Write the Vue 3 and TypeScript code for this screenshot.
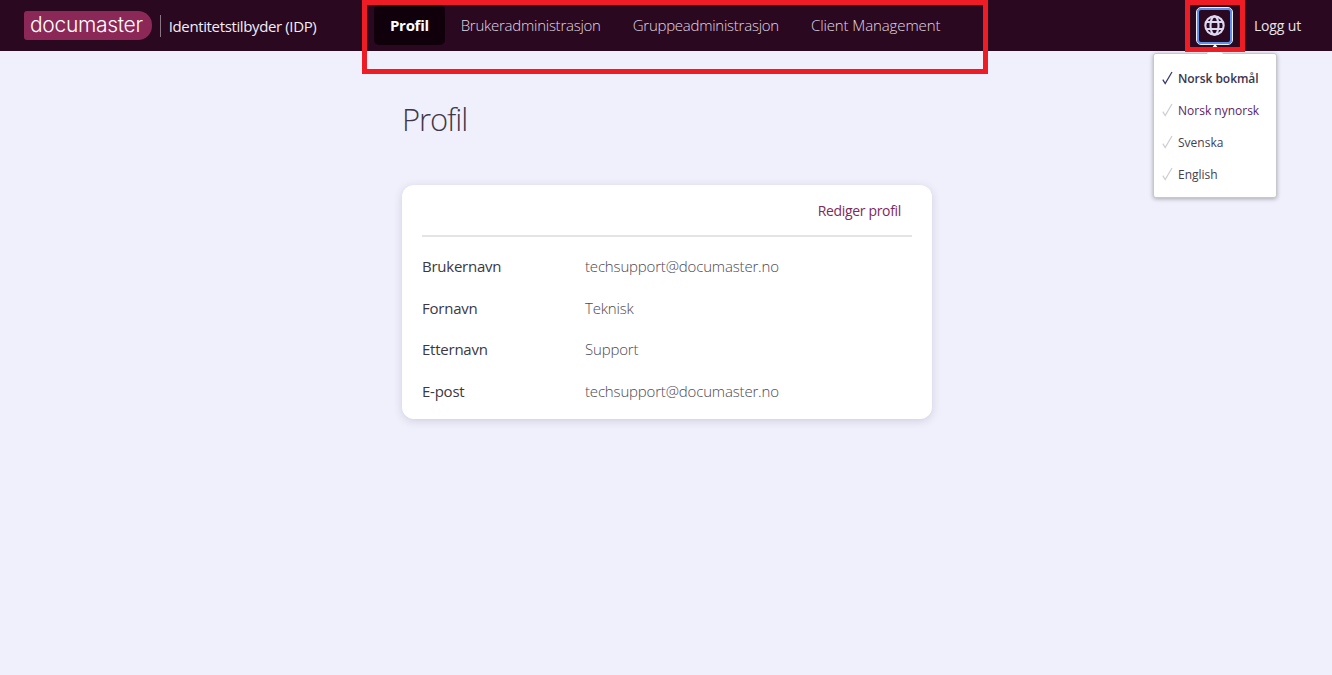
<script setup lang="ts">
const navItems = [
  { label: 'Profil', active: true },
  { label: 'Brukeradministrasjon', active: false },
  { label: 'Gruppeadministrasjon', active: false },
  { label: 'Client Management', active: false },
]

const languages = [
  { label: 'Norsk bokmål', selected: true, tone: 'plain' },
  { label: 'Norsk nynorsk', selected: false, tone: 'link' },
  { label: 'Svenska', selected: false, tone: 'plain' },
  { label: 'English', selected: false, tone: 'plain' },
]

const fields = [
  { label: 'Brukernavn', value: 'techsupport@documaster.no' },
  { label: 'Fornavn', value: 'Teknisk' },
  { label: 'Etternavn', value: 'Support' },
  { label: 'E-post', value: 'techsupport@documaster.no' },
]
</script>

<template>
  <div class="page">
    <header class="topbar">
      <div class="brand">
        <span class="logo">documaster</span>
        <span class="app-name">Identitetstilbyder (IDP)</span>
      </div>
      <nav class="nav">
        <a v-for="item in navItems" :key="item.label" class="nav-item" :class="{ active: item.active }">{{ item.label }}</a>
      </nav>
      <div class="actions">
        <button class="globe" type="button" aria-label="Språk">
          <svg width="21" height="21" viewBox="0 0 22 22" fill="none" stroke="#dcd8f2" stroke-width="2.2">
            <circle cx="11" cy="11" r="9.6" />
            <ellipse cx="11" cy="11" rx="4.2" ry="9.6" />
            <path d="M2.4 7.4h17.2M2.4 14.6h17.2" />
          </svg>
        </button>
        <a class="logout">Logg ut</a>
      </div>
    </header>

    <main class="content">
      <h1 class="title">Profil</h1>
      <section class="card">
        <div class="card-head">
          <a class="edit">Rediger profil</a>
        </div>
        <dl class="fields">
          <div v-for="field in fields" :key="field.label" class="field">
            <dt>{{ field.label }}</dt>
            <dd>{{ field.value }}</dd>
          </div>
        </dl>
      </section>
    </main>

    <div class="lang-menu">
      <span class="arrow" />
      <div v-for="lang in languages" :key="lang.label" class="lang" :class="[lang.tone, { selected: lang.selected }]">
        <svg class="check" width="11" height="14" viewBox="0 0 11 14" fill="none" stroke-width="1.3">
          <path d="M0.8 8.6 3.2 12.6 10 1" />
        </svg>
        <span>{{ lang.label }}</span>
      </div>
    </div>

    <!-- annotation boxes on the screenshot -->
    <div class="mark mark-nav" />
    <div class="mark mark-globe" />
  </div>
</template>

<style scoped>
.page {
  position: relative;
  min-height: 675px;
  background: #f0f0fc;
  font-family: "Open Sans", "Noto Sans", sans-serif;
  color: #2b2233;
  overflow: hidden;
}

.topbar {
  display: flex;
  align-items: center;
  height: 51px;
  padding: 0 31px 0 24px;
  background: #2a0820;
}

.brand {
  display: flex;
  align-items: center;
  width: 350px;
  flex: none;
}

.logo {
  display: block;
  height: 29px;
  padding: 0 9px 0 6px;
  border-radius: 3px 14px 14px 3px;
  background: #8c2857;
  color: #fff;
  font-family: "Inter", sans-serif;
  font-size: 21px;
  font-weight: 300;
  line-height: 28px;
  letter-spacing: -0.3px;
}

.app-name {
  margin-left: 8px;
  padding-left: 8px;
  border-left: 1px solid #8a7585;
  color: #f2eef5;
  font-size: 15px;
  line-height: 22px;
  letter-spacing: -0.37px;
}

.nav {
  display: flex;
  align-items: flex-start;
  box-sizing: border-box;
  height: 51px;
  padding-top: 5px;
  flex: 1;
}

.nav-item {
  height: 40px;
  padding: 0 16px;
  border-radius: 5px;
  color: #e0d8e0;
  font-size: 15px;
  font-weight: 300;
  line-height: 41px;
  letter-spacing: -0.25px;
}

.nav-item:last-child {
  letter-spacing: -0.1px;
}

.nav-item.active {
  background: #10000c;
  color: #fff;
  font-weight: 700;
  letter-spacing: -0.3px;
}

.actions {
  display: flex;
  align-items: center;
  gap: 21px;
}

.globe {
  display: flex;
  align-items: center;
  justify-content: center;
  width: 37px;
  height: 38px;
  padding: 0;
  border: 1px solid #eef0fa;
  border-radius: 5px;
  background: #2a0820;
  box-shadow: inset 0 0 0 2px #5f8fe8;
}

.logout {
  color: #e8e2ea;
  font-size: 14px;
  line-height: 20px;
  letter-spacing: -0.15px;
}

.content {
  width: 530px;
  margin-left: 402px;
}

.title {
  margin: 45px 0 43px;
  font-size: 31px;
  font-weight: 300;
  line-height: 46px;
  letter-spacing: -1.1px;
  color: #40384a;
}

.card {
  height: 234px;
  padding: 0 20px;
  border-radius: 12px;
  background: #fff;
  box-shadow: 0 2px 8px rgba(70, 70, 110, 0.2);
}

.card-head {
  display: flex;
  justify-content: flex-end;
  box-sizing: border-box;
  height: 52px;
  padding: 16px 11px 0 0;
  border-bottom: 2px solid #e4e4e8;
}

.edit {
  color: #7e2a5c;
  font-size: 14px;
  line-height: 20px;
  letter-spacing: -0.33px;
}

.fields {
  margin: 0;
  padding-top: 8.4px;
}

.field {
  display: flex;
  height: 41.6px;
  align-items: center;
  font-size: 15px;
}

.field dt {
  width: 163px;
  color: #3c3842;
  letter-spacing: -0.24px;
}

.field dd {
  margin: 0;
  color: #4c4852;
  font-weight: 300;
  letter-spacing: -0.17px;
}

.lang-menu {
  position: absolute;
  top: 53px;
  left: 1153px;
  width: 124px;
  height: 145px;
  box-sizing: border-box;
  padding-top: 8px;
  border: 1px solid #c8c8cc;
  border-radius: 3px;
  background: #fff;
  box-shadow: 0 1px 4px rgba(0, 0, 0, 0.3);
}

.arrow {
  position: absolute;
  top: -10px;
  left: 53px;
  width: 0;
  height: 0;
  border-left: 8px solid transparent;
  border-right: 8px solid transparent;
  border-bottom: 10px solid #fff;
}

.lang {
  display: flex;
  align-items: center;
  height: 32px;
  padding-left: 8px;
  font-size: 12px;
  color: #46404e;
}

.lang.link {
  color: #5e1c66;
}

.lang.selected {
  color: #3a3550;
  font-weight: 600;
  letter-spacing: -0.05px;
}

.check {
  flex: none;
  margin-right: 5px;
  stroke: #cfcfd2;
}

.lang.selected .check {
  stroke: #3a3a70;
}

.mark {
  position: absolute;
  box-sizing: border-box;
  border: 5px solid #ee1c25;
  pointer-events: none;
}

.mark-nav {
  top: 0;
  left: 362px;
  width: 626px;
  height: 74px;
}

.mark-globe {
  top: 0;
  left: 1185px;
  width: 60px;
  height: 52px;
}
</style>
